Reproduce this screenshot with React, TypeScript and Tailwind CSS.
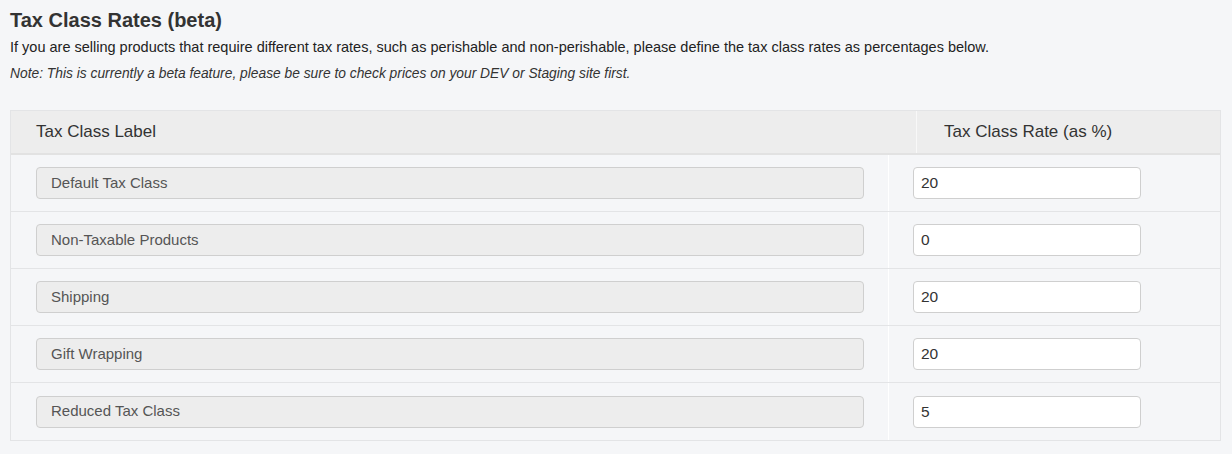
const ROWS = [
  { label: 'Default Tax Class', rate: '20' },
  { label: 'Non-Taxable Products', rate: '0' },
  { label: 'Shipping', rate: '20' },
  { label: 'Gift Wrapping', rate: '20' },
  { label: 'Reduced Tax Class', rate: '5' },
];

export default function App() {
  return (
    <div className="min-h-[454px] bg-[#f5f6f8] px-[10px] pt-[8px] font-['Liberation_Sans',Arial,sans-serif] text-[#333]">
      <h2 className="text-[20px] font-bold leading-[24px] text-[#333]">Tax Class Rates (beta)</h2>
      <p className="mt-[5px] text-[14.5px] leading-[20px] text-[#222]">
        If you are selling products that require different tax rates, such as perishable and non-perishable, please define the tax class rates as percentages below.
      </p>
      <p className="mt-[9px] text-[13.8px] italic leading-[16px] text-[#333]">
        Note: This is currently a beta feature, please be sure to check prices on your DEV or Staging site first.
      </p>

      <div className="mt-[28px] w-[1211px] border border-[#e3e4e6] bg-[#f5f6f8]">
        <div className="flex h-[44px] border-b-2 border-[#e2e2e2] bg-[#ededed] text-[17px] text-[#333]">
          <div className="flex w-[906px] items-center border-r border-[#f8f8f8] pl-[25px]">Tax Class Label</div>
          <div className="flex flex-1 items-center pl-[27px]">Tax Class Rate (as %)</div>
        </div>
        {ROWS.map((row, i) => (
          <div
            key={row.label}
            className={`flex h-[57px] ${i < ROWS.length - 1 ? 'border-b border-[#e3e4e6]' : ''}`}
          >
            <div className="flex w-[878px] items-center border-r border-white pl-[25px] pr-[24px]">
              <div className="flex h-[32px] w-full items-center rounded-[4px] border border-[#cfcfcf] bg-[#ededed] pl-[14px] text-[15px] text-[#555]">
                {row.label}
              </div>
            </div>
            <div className="flex flex-1 items-center pl-[24px]">
              <input
                defaultValue={row.rate}
                className="h-[32px] w-[228px] rounded-[4px] border border-[#cfcfcf] bg-white pl-[7px] text-[15.5px] text-[#333] outline-none"
              />
            </div>
          </div>
        ))}
      </div>
    </div>
  );
}
